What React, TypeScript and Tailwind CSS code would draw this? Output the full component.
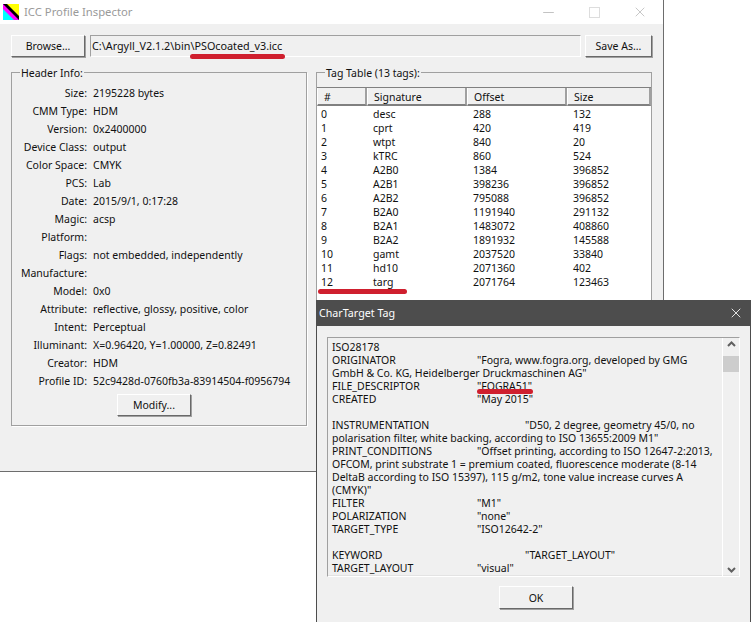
import React from 'react';
import { X, Minus } from 'lucide-react';

const headerInfo: [string, string][] = [
  ['Size:', '2195228 bytes'],
  ['CMM Type:', 'HDM'],
  ['Version:', '0x2400000'],
  ['Device Class:', 'output'],
  ['Color Space:', 'CMYK'],
  ['PCS:', 'Lab'],
  ['Date:', '2015/9/1, 0:17:28'],
  ['Magic:', 'acsp'],
  ['Platform:', ''],
  ['Flags:', 'not embedded, independently'],
  ['Manufacture:', ''],
  ['Model:', '0x0'],
  ['Attribute:', 'reflective, glossy, positive, color'],
  ['Intent:', 'Perceptual'],
  ['Illuminant:', 'X=0.96420, Y=1.00000, Z=0.82491'],
  ['Creator:', 'HDM'],
  ['Profile ID:', '52c9428d-0760fb3a-83914504-f0956794'],
];

const tags: [string, string, string, string][] = [
  ['0', 'desc', '288', '132'],
  ['1', 'cprt', '420', '419'],
  ['2', 'wtpt', '840', '20'],
  ['3', 'kTRC', '860', '524'],
  ['4', 'A2B0', '1384', '396852'],
  ['5', 'A2B1', '398236', '396852'],
  ['6', 'A2B2', '795088', '396852'],
  ['7', 'B2A0', '1191940', '291132'],
  ['8', 'B2A1', '1483072', '408860'],
  ['9', 'B2A2', '1891932', '145588'],
  ['10', 'gamt', '2037520', '33840'],
  ['11', 'hd10', '2071360', '402'],
  ['12', 'targ', '2071764', '123463'],
];

// label width is where the tab stop lands in the edit box
const charLines: { t: string; v?: string; w?: string }[] = [
  { t: 'ISO28178' },
  { t: 'ORIGINATOR', v: '"Fogra, www.fogra.org, developed by GMG', w: 'w-[145px]' },
  { t: 'GmbH & Co. KG, Heidelberger Druckmaschinen AG"' },
  { t: 'FILE_DESCRIPTOR', v: '"FOGRA51"', w: 'w-[145px]' },
  { t: 'CREATED', v: '"May 2015"', w: 'w-[145px]' },
  { t: '' },
  { t: 'INSTRUMENTATION', v: '"D50, 2 degree, geometry 45/0, no', w: 'w-[193px]' },
  { t: 'polarisation filter, white backing, according to ISO 13655:2009 M1"' },
  { t: 'PRINT_CONDITIONS', v: '"Offset printing, according to ISO 12647-2:2013,', w: 'w-[145px]' },
  { t: 'OFCOM, print substrate 1 = premium coated, fluorescence moderate (8-14' },
  { t: 'DeltaB according to ISO 15397), 115 g/m2, tone value increase curves A' },
  { t: '(CMYK)"' },
  { t: 'FILTER', v: '"M1"', w: 'w-[145px]' },
  { t: 'POLARIZATION', v: '"none"', w: 'w-[145px]' },
  { t: 'TARGET_TYPE', v: '"ISO12642-2"', w: 'w-[145px]' },
  { t: '' },
  { t: 'KEYWORD', v: '"TARGET_LAYOUT"', w: 'w-[193px]' },
  { t: 'TARGET_LAYOUT', v: '"visual"', w: 'w-[145px]' },
];

const Btn = ({ label, className }: { label: string; className: string }) => (
  <div className={`flex shrink-0 items-center justify-center border border-t-white border-l-white border-r-[#696969] border-b-[#696969] shadow-[1px_1px_0_#a0a0a0] text-[10.5px] text-[#111] ${className}`}>
    {label}
  </div>
);

const HeadCell = ({ label, className }: { label: string; className: string }) => (
  <div className={`h-full shrink-0 flex items-center border-l border-l-white border-r-2 border-b-2 border-r-[#a0a0a0] border-b-[#808080] pl-[6px] pt-[2px] bg-[#f0f0f0] ${className}`}>
    {label}
  </div>
);

const Mark = ({ className }: { className: string }) => (
  <div className={`absolute h-[5px] rounded-full bg-[#cf1f2e] blur-[0.5px] ${className}`} />
);

export default function App() {
  return (
    <div className="relative w-[751px] h-[622px] overflow-hidden bg-white font-['Liberation_Sans',sans-serif] text-[10.5px] leading-[14px] text-[#111]">
      {/* main window */}
      <div className="w-[664px] h-[472px] flex flex-col bg-[#f0f0f0] border-r border-b border-r-[#6d6d6d] border-b-[#6d6d6d]">
        <div className="h-6 shrink-0 bg-white flex items-center pl-[3px]">
          <svg width="16" height="16" viewBox="0 0 16 16" className="mr-[5px]">
            <rect width="16" height="16" fill="#000" />
            <polygon points="0,0 16,16 0,16" fill="#ff00ff" />
            <polygon points="0,5 11,16 0,16" fill="#00ffff" />
            <polygon points="4,0 16,0 16,12" fill="#ffff00" />
          </svg>
          <span className="font-['Noto_Sans',sans-serif] text-[11.3px] text-[#9a9a9a]">ICC Profile Inspector</span>
          <div className="ml-auto flex items-center text-[#aaa]">
            <Minus size={17} strokeWidth={1} className="mr-[32px]" />
            <div className="w-[11px] h-[11px] border border-[#ddd] mr-[32px]" />
            <X size={16} strokeWidth={1} className="mr-[15px]" />
          </div>
        </div>
        <div className="flex items-center gap-[5px] pl-[11px] pt-[11px]">
          <Btn label="Browse..." className="w-[74px] h-[22px]" />
          <div className="w-[491px] h-[22px] border border-t-[#a0a0a0] border-l-[#a0a0a0] border-r-white border-b-white flex items-center pl-[1px] text-[10.8px]">
            C:\Argyll_V2.1.2\bin\PSOcoated_v3.icc
          </div>
          <Btn label="Save As..." className="w-[67px] h-[22px] ml-[-1px]" />
        </div>
        <div className="flex gap-[9px] pl-[11px] pt-[15px]">
          {/* header info */}
          <div className="relative w-[296px] h-[354px] border border-[#a0a0a0] shadow-[1px_1px_0_#fff] pt-[11px]">
            <span className="absolute -top-[7px] left-[8px] bg-[#f0f0f0] px-[1px]">Header Info:</span>
            {headerInfo.map(([k, v]) => (
              <div key={k} className="flex h-[18px] items-center">
                <span className="w-[75px] text-right shrink-0 whitespace-nowrap">{k}</span>
                <span className="ml-[6px] whitespace-nowrap">{v}</span>
              </div>
            ))}
            <div className="flex justify-center pt-[4px] pr-[10px]">
              <Btn label="Modify..." className="w-[74px] h-[22px]" />
            </div>
          </div>
          {/* tag table */}
          <div className="relative w-[336px] h-[354px] border border-[#a0a0a0] pt-[14px]">
            <span className="absolute -top-[7px] left-[8px] bg-[#f0f0f0] px-[1px]">Tag Table (13 tags):</span>
            <div className="bg-white h-[300px] border-t border-t-[#808080]">
              <div className="flex h-[18px] bg-[#f0f0f0]">
                <HeadCell label="#" className="w-[50px]" />
                <HeadCell label="Signature" className="w-[100px]" />
                <HeadCell label="Offset" className="w-[100px]" />
                <HeadCell label="Size" className="flex-1" />
              </div>
              <div className="pt-[1px]">
                {tags.map(([n, s, o, z]) => (
                  <div key={n} className="flex h-[14px] items-center">
                    <span className="w-[56px] pl-[4px]">{n}</span>
                    <span className="w-[100px]">{s}</span>
                    <span className="w-[100px]">{o}</span>
                    <span>{z}</span>
                  </div>
                ))}
              </div>
            </div>
          </div>
        </div>
      </div>

      {/* CharTarget dialog, floats over the main window */}
      <div className="absolute left-[316px] top-[300px] w-[435px] h-[322px] flex flex-col bg-[#f0f0f0] border-l border-r border-[#4d4d4d]">
        <div className="h-[26px] shrink-0 bg-[#4d4d4d] flex items-center justify-between pl-[2px] pr-[5px] text-white font-['Noto_Sans',sans-serif] text-[10.7px]">
          <span>CharTarget Tag</span>
          <X size={16} strokeWidth={1.25} className="mr-[1px]" />
        </div>
        <div className="flex mx-[10px] mt-[11px] h-[240px] border border-t-[#a0a0a0] border-l-[#a0a0a0] border-r-white border-b-white shadow-[inset_0_-1px_0_#e3e3e3]">
          <div className="flex-1 pl-[4px] pt-[3px] font-['DejaVu_Sans',sans-serif] text-[10.5px] leading-[13px] whitespace-nowrap overflow-hidden">
            {charLines.map((l, i) => (
              <div key={i} className="h-[13px]">
                {l.v ? <span className={`inline-block ${l.w}`}>{l.t}</span> : l.t}
                {l.v}
              </div>
            ))}
          </div>
          <div className="w-[17px] shrink-0 border-l border-l-white flex flex-col items-center justify-between pb-[3px] pt-[3px]">
            <div className="w-full flex flex-col items-center">
              <svg width="9" height="6" viewBox="0 0 9 6"><path d="M1 5 L4.5 1.5 L8 5" fill="none" stroke="#606060" strokeWidth="2" /></svg>
              <div className="w-full h-[16px] bg-[#cdcdcd] mt-[9px]" />
            </div>
            <svg width="9" height="6" viewBox="0 0 9 6"><path d="M1 1 L4.5 4.5 L8 1" fill="none" stroke="#606060" strokeWidth="2" /></svg>
          </div>
        </div>
        <div className="flex justify-center pt-[9px] pl-[5px]">
          <Btn label="OK" className="w-[74px] h-[23px]" />
        </div>
      </div>

      {/* red marker strokes drawn on the screenshot */}
      <Mark className="left-[190px] top-[54px] w-[95px]" />
      <Mark className="left-[318px] top-[289px] w-[89px]" />
      <Mark className="left-[477px] top-[389px] w-[56px]" />
    </div>
  );
}
